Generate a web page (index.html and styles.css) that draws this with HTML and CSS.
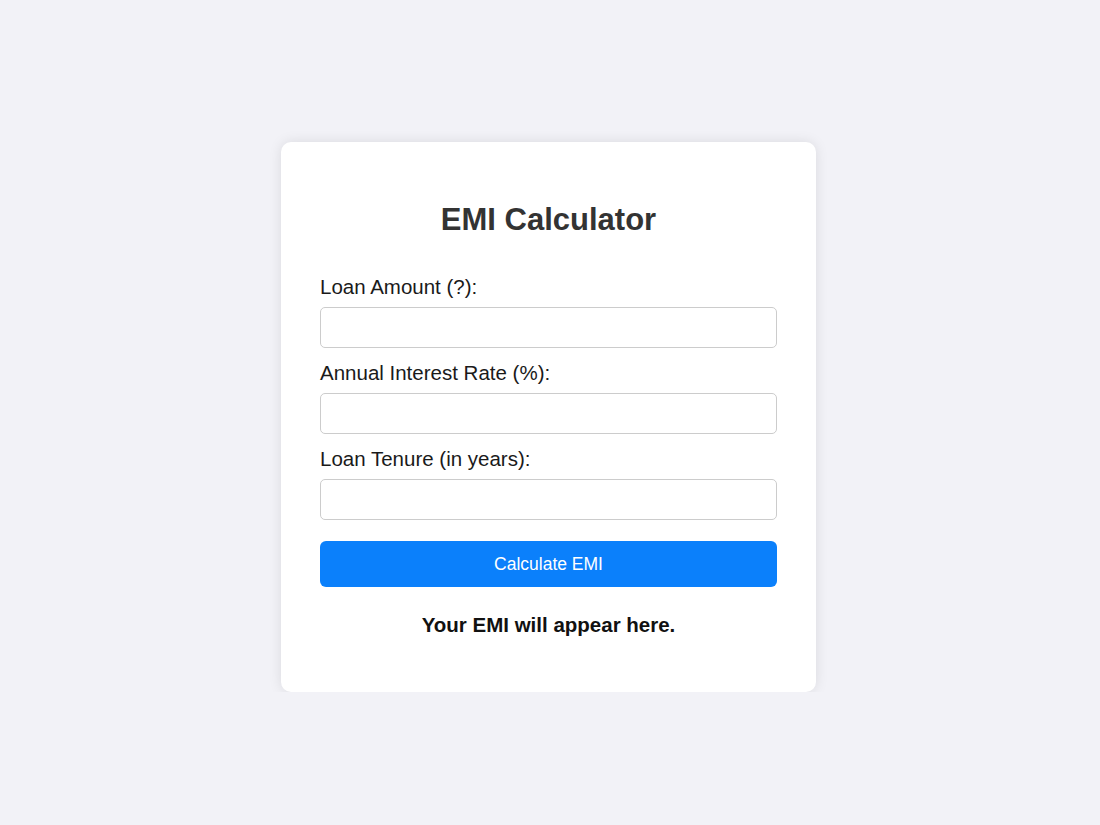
FILE: index.html
```html
<!DOCTYPE html>
<html lang="en">
<head>
    <meta charset="UTF-8">
    <meta name="viewport" content="width=device-width, initial-scale=1.0">
    <title>EMI Calculator</title>
    <link rel="stylesheet" href="styles.css">
</head>
<body>
    <div class="container">
        <h1>EMI Calculator</h1>
        <form id="emiForm">
            <label for="loanAmount">Loan Amount (?):</label>
            <input type="number" id="loanAmount" required />
            <label for="interestRate">Annual Interest Rate (%):</label>
            <input type="number" id="interestRate" step="0.01" required />
            <label for="loanTenure">Loan Tenure (in years):</label>
            <input type="number" id="loanTenure" required />
            <button type="button" onclick="calculateEMI()">Calculate EMI</button>
        </form>
        <p id="emiOutput">Your EMI will appear here.</p>
    </div>

    <script>
        // Function to calculate the monthly EMI
        function calculateEMI() {
            const principal = parseFloat(document.getElementById('loanAmount').value);
            const annualRate = parseFloat(document.getElementById('interestRate').value);
            const years = parseFloat(document.getElementById('loanTenure').value);

            if (isNaN(principal) || isNaN(annualRate) || isNaN(years)) {
                alert('Please enter valid values for all fields.');
                return;
            }

            const monthlyRate = annualRate / 12 / 100;
            const months = years * 12;
            let emi;

            if (monthlyRate === 0) {
                emi = principal / months;
            } else {
                emi = principal * monthlyRate * Math.pow(1 + monthlyRate, months) / (Math.pow(1 + monthlyRate, months) - 1);
            }

            document.getElementById('emiOutput').innerText = `Your EMI: ${emi.toFixed(2)}`;
        }
    </script>
</body>
</html>
```

FILE: styles.css
```css
body {
    font-family: 'Liberation Sans', Arial, sans-serif;
    background-color: #f2f2f7;
    margin: 0;
    padding: 0;
}

.container {
    width: 457px;
    margin: 142px 0 0 calc(50% - 269px);
    padding: 39px;
    background-color: #fff;
    border-radius: 10px;
    box-shadow: 0 0 13px rgba(0, 0, 0, 0.1);
}

h1 {
    font-size: 31px;
    color: #333;
    text-align: center;
    margin: 21px 0 37px;
}

form {
    display: flex;
    flex-direction: column;
}

label {
    display: block;
    font-size: 20.5px;
    color: #1a1a1a;
    margin-bottom: 7.5px;
}

input {
    width: 100%;
    height: 41.5px;
    padding: 10px;
    margin: 0 0 13px;
    box-sizing: border-box;
    border: 1px solid #ccc;
    border-radius: 5px;
    font-size: 17px;
}

button {
    height: 46px;
    margin-top: 8px;
    background-color: #0b80fb;
    color: white;
    font-family: 'Liberation Sans', Arial, sans-serif;
    font-size: 17.5px;
    border: none;
    border-radius: 6px;
    cursor: pointer;
    width: 100%;
}

button:hover {
    background-color: #0069d9;
}

p {
    margin: 26px 0 16px;
    font-size: 20.5px;
    font-weight: bold;
    color: #111;
    text-align: center;
}
```
